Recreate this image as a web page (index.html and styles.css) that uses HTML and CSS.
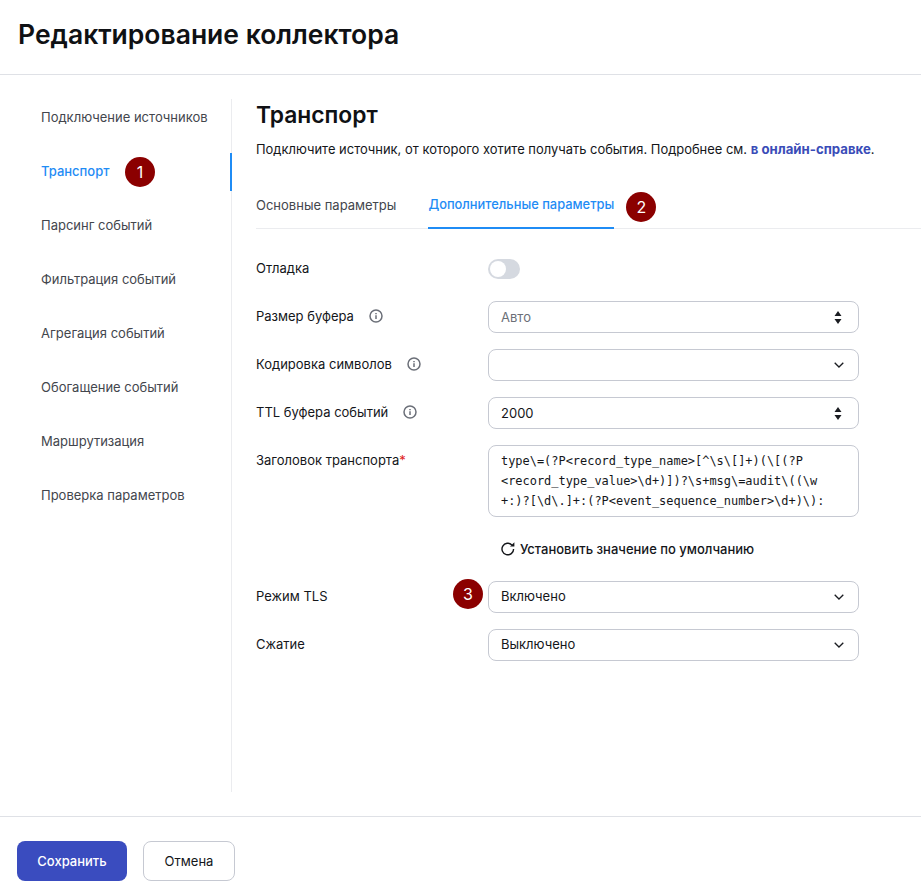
FILE: index.html
```html
<!DOCTYPE html>
<html lang="ru">
<head>
<meta charset="utf-8">
<title>Редактирование коллектора</title>
<link rel="stylesheet" href="styles.css">
</head>
<body>
<div class="page">
  <header class="header"><h1 class="page-title">Редактирование коллектора</h1></header>
  <div class="main">
    <nav class="nav">
      <a class="nav-item">Подключение источников</a>
      <a class="nav-item active">Транспорт<span class="badge badge-nav">1</span></a>
      <a class="nav-item">Парсинг событий</a>
      <a class="nav-item">Фильтрация событий</a>
      <a class="nav-item">Агрегация событий</a>
      <a class="nav-item">Обогащение событий</a>
      <a class="nav-item">Маршрутизация</a>
      <a class="nav-item">Проверка параметров</a>
    </nav>
    <section class="content">
      <h2 class="section-title">Транспорт</h2>
      <p class="section-desc">Подключите источник, от которого хотите получать события. Подробнее см. <a class="link">в онлайн-справке</a>.</p>
      <div class="tabs">
        <span class="tab">Основные параметры</span>
        <span class="tab tab-active">Дополнительные параметры<span class="badge badge-tab">2</span></span>
      </div>
      <div class="form">
        <div class="label">Отладка</div>
        <div class="toggle-wrap"><span class="toggle"><span class="knob"></span></span></div>

        <div class="label">Размер буфера<svg class="info" viewBox="0 0 14 14"><circle cx="7" cy="7" r="6" /><path d="M7 6.3v3.6M7 4v1.2"/></svg></div>
        <div class="control"><span class="muted">Авто</span><svg class="stepper" viewBox="0 0 8 13"><path d="M4 0l3.5 5H.5zM4 13L.5 8h7z"/></svg></div>

        <div class="label">Кодировка символов<svg class="info" viewBox="0 0 14 14"><circle cx="7" cy="7" r="6" /><path d="M7 6.3v3.6M7 4v1.2"/></svg></div>
        <div class="control"><span></span><svg class="chevron" viewBox="0 0 10 6"><path d="M.7.7L5 5l4.3-4.3"/></svg></div>

        <div class="label">TTL буфера событий<svg class="info" viewBox="0 0 14 14"><circle cx="7" cy="7" r="6" /><path d="M7 6.3v3.6M7 4v1.2"/></svg></div>
        <div class="control"><span>2000</span><svg class="stepper" viewBox="0 0 8 13"><path d="M4 0l3.5 5H.5zM4 13L.5 8h7z"/></svg></div>

        <div class="label label-top">Заголовок транспорта<span class="req">*</span></div>
        <div class="code">type\=(?P&lt;record_type_name&gt;[^\s\[]+)(\[(?P<br>&lt;record_type_value&gt;\d+)])?\s+msg\=audit\((\w<br>+:)?[\d\.]+:(?P&lt;event_sequence_number&gt;\d+)\):</div>

        <div class="label"></div>
        <div class="reset"><svg class="reset-icon" viewBox="0 0 16 16"><path d="M13.6 8a5.8 5.8 0 1 1-1.7-4.1"/><path class="fill" d="M14.4 1.2v4.4H10z"/></svg>Установить значение по умолчанию</div>

        <div class="label">Режим TLS</div>
        <div class="control"><span class="badge badge-form">3</span><span class="value-up">Включено</span><svg class="chevron" viewBox="0 0 10 6"><path d="M.7.7L5 5l4.3-4.3"/></svg></div>

        <div class="label">Сжатие</div>
        <div class="control"><span class="value-up">Выключено</span><svg class="chevron" viewBox="0 0 10 6"><path d="M.7.7L5 5l4.3-4.3"/></svg></div>
      </div>
    </section>
  </div>
  <footer class="footer">
    <button class="btn btn-primary">Сохранить</button>
    <button class="btn btn-secondary">Отмена</button>
  </footer>
</div>
</body>
</html>
```
FILE: styles.css
```css
* { box-sizing: border-box; }
html, body { margin: 0; padding: 0; background: #fff; }
body { font-family: Inter, "Noto Sans", sans-serif; color: #14161a; font-size: 13px; }
.page { width: 921px; height: 895px; display: flex; flex-direction: column; overflow: hidden; }
.header { height: 75px; border-bottom: 1px solid #dfe1e6; padding: 0 18px; display: flex; align-items: center; }
.page-title { margin: 0 0 7px; font-size: 26.5px; line-height: 32px; font-weight: 600; color: #0f1114; }
.main { display: flex; height: 741px; padding-top: 24px; }
.nav { width: 232px; height: 693px; border-right: 1px solid #ebecef; display: flex; flex-direction: column; gap: 18px; }
.nav-item { display: flex; align-items: center; height: 36px; padding-left: 41px; color: #43464d; font-size: 13px; position: relative; flex: none; }
.nav-item.active { color: #1f8cf5; font-weight: 500; }
.nav-item.active::after { content: ""; position: absolute; right: -1px; top: 0; width: 2px; height: 38px; background: #1f8cf5; }
.badge { width: 30px; height: 30px; border-radius: 50%; background: #8b0000; color: #fff; display: flex; align-items: center; justify-content: center; font-size: 16px; font-weight: 400; position: absolute; }
.badge-nav { left: 125px; top: 4px; }
.badge-tab { left: 198px; top: -4px; }
.badge-form { left: -36px; top: -3px; }
.content { flex: 1; padding-left: 24px; min-width: 0; }
.section-title { margin: 0; font-size: 22.8px; line-height: 32px; font-weight: 600; color: #0f1114; }
.section-desc { margin: 8px 0 0; font-size: 12.95px; line-height: 20px; color: #14161a; }
.link { color: #3a4cb8; font-weight: 700; font-size: 13.2px; }
.tabs { display: flex; gap: 32px; margin-top: 37px; border-bottom: 1px solid #ebecef; height: 33px; }
.tab { position: relative; color: #43464d; font-size: 13px; line-height: 18px; white-space: nowrap; }
.tab-active { color: #1f8cf5; font-weight: 500; font-size: 12.87px; height: 33px; border-bottom: 2px solid #1f8cf5; }
.form { display: grid; grid-template-columns: 232px 371px; row-gap: 16px; margin-top: 24px; }
.label { min-height: 32px; padding-bottom: 2px; display: flex; align-items: center; color: #14161a; font-size: 13px; white-space: nowrap; }
.label-top { align-items: flex-start; padding-top: 7px; }
.info { width: 14px; height: 14px; margin-left: 15px; fill: none; stroke: #6b6f78; stroke-width: 1.5; }
.req { color: #e02020; }
.toggle-wrap { height: 32px; display: flex; align-items: center; }
.toggle { width: 32px; height: 20px; border-radius: 10px; background: #d5d9e0; position: relative; display: block; }
.knob { position: absolute; left: 2px; top: 2px; width: 16px; height: 16px; border-radius: 50%; background: #fff; }
.control { height: 32px; border: 1px solid #c6c9d2; border-radius: 8px; padding: 0 14px 0 12px; display: flex; align-items: center; justify-content: space-between; position: relative; font-size: 13px; color: #14161a; background: #fff; }
.value-up { margin-bottom: 2px; }
.muted { color: #6b6f78; }
.stepper { width: 8px; height: 13px; fill: #1b1d22; margin-right: 2px; }
.chevron { width: 10px; height: 6px; fill: none; stroke: #1b1d22; stroke-width: 1.3; }
.code { height: 72px; border: 1px solid #c6c9d2; border-radius: 8px; padding: 5px 12px; font-family: "DejaVu Sans Mono", monospace; font-size: 11.95px; line-height: 20px; color: #14161a; white-space: nowrap; overflow: hidden; }
.reset { height: 32px; display: flex; align-items: center; padding-left: 12px; gap: 4px; font-weight: 500; font-size: 13px; color: #14161a; }
.reset-icon { width: 16px; height: 16px; fill: none; stroke: #14161a; stroke-width: 1.4; }
.reset-icon .fill { fill: #14161a; stroke: none; }
.footer { border-top: 1px solid #dfe1e6; height: 79px; padding: 24px 17px 0; display: flex; gap: 16px; align-items: flex-start; }
.btn { height: 40px; border-radius: 8px; font-family: inherit; font-size: 13px; padding: 0; }
.btn-primary { width: 110px; background: #3a4cbf; border: none; color: #fff; font-weight: 500; }
.btn-secondary { width: 92px; background: #fff; border: 1px solid #c6c9d2; color: #14161a; }
```
